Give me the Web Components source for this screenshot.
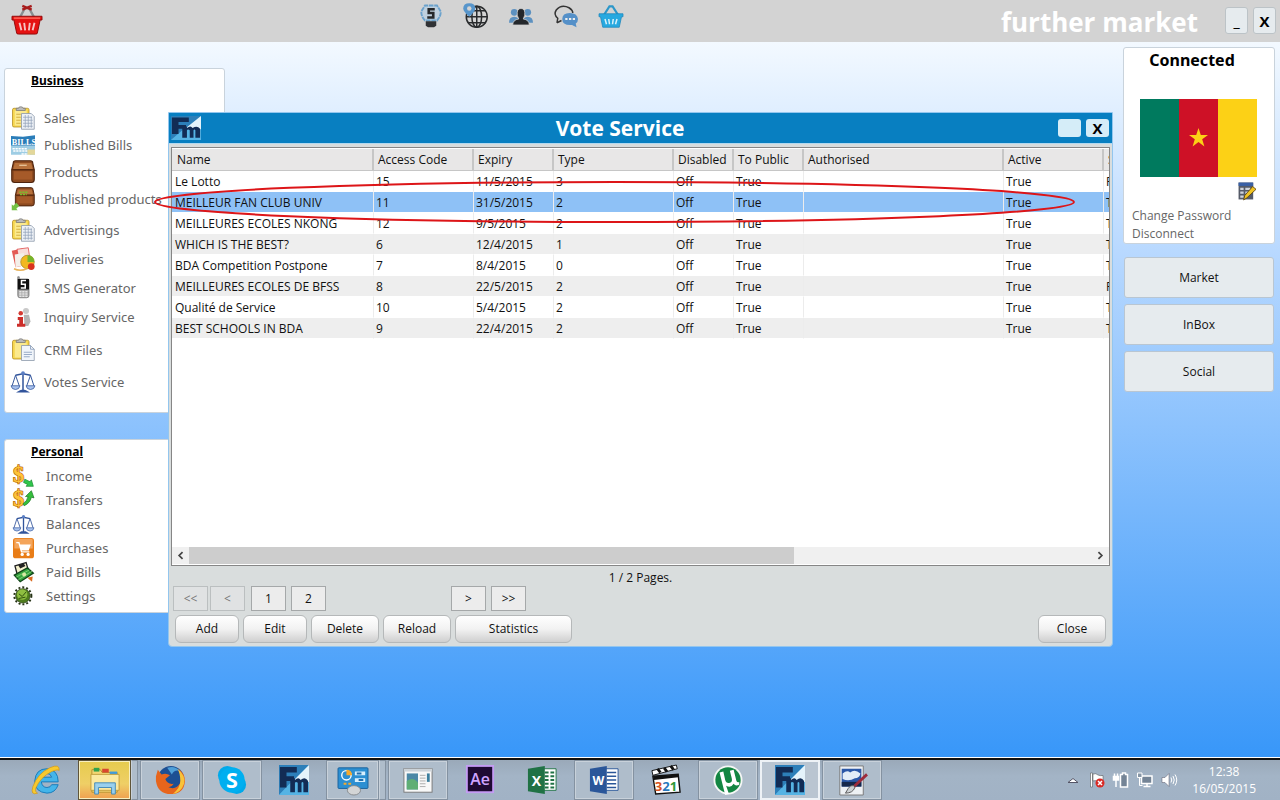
<!DOCTYPE html>
<html lang="en">
<head>
  <meta charset="utf-8">
  <title>further market</title>
  <style>
    html, body {
      margin: 0;
      min-height: 100%;
    }
    body {
      font: 12px/16px "Open Sans", "Noto Sans", sans-serif;
      color: #111;
    }
  </style>
</head>
<body>

<market-shell>
  <market-header slot="top"></market-header>

  <menu-panel slot="left" heading="Business">
    <menu-group style="--row: 27px">
      <menu-item icon="clipboard">Sales</menu-item>
      <menu-item icon="bills">Published Bills</menu-item>
      <menu-item icon="chest">Products</menu-item>
      <menu-item icon="chestOut">Published products</menu-item>
    </menu-group>
    <menu-group style="--row: 29px">
      <menu-item icon="clipboard">Advertisings</menu-item>
      <menu-item icon="delivery">Deliveries</menu-item>
      <menu-item icon="phone">SMS Generator</menu-item>
      <menu-item icon="inquiry">Inquiry Service</menu-item>
    </menu-group>
    <menu-group style="--row: 32px">
      <menu-item icon="crm">CRM Files</menu-item>
      <menu-item icon="scales">Votes Service</menu-item>
    </menu-group>
  </menu-panel>

  <menu-panel slot="left" heading="Personal" compact>
    <menu-group style="--row: 24px; --icon: 21px">
      <menu-item icon="income">Income</menu-item>
      <menu-item icon="transfer">Transfers</menu-item>
      <menu-item icon="scales">Balances</menu-item>
      <menu-item icon="cart">Purchases</menu-item>
      <menu-item icon="paid">Paid Bills</menu-item>
      <menu-item icon="gear">Settings</menu-item>
    </menu-group>
  </menu-panel>

  <account-card slot="right"></account-card>
  <side-button slot="right">Market</side-button>
  <side-button slot="right">InBox</side-button>
  <side-button slot="right">Social</side-button>

  <app-window slot="window" heading="Vote Service">
    <vote-table></vote-table>
    <vote-pager></vote-pager>
  </app-window>

  <task-bar slot="bottom">
    <task-button icon="ie" label="Internet Explorer"></task-button>
    <task-button icon="explorer" label="File Explorer" kind="hot stack"></task-button>
    <task-button icon="firefox" label="Firefox" kind="open"></task-button>
    <task-button icon="skype" label="Skype" kind="open"></task-button>
    <task-button icon="logo" label="Further Market"></task-button>
    <task-button icon="control" label="Control Panel" kind="open stack"></task-button>
    <task-button icon="viewer" label="Viewer" kind="open"></task-button>
    <task-button icon="ae" label="After Effects"></task-button>
    <task-button icon="excel" label="Excel"></task-button>
    <task-button icon="word" label="Word" kind="open"></task-button>
    <task-button icon="clapper" label="Media Player Classic"></task-button>
    <task-button icon="utorrent" label="uTorrent" kind="open"></task-button>
    <task-button icon="logo" label="Further Market" kind="active"></task-button>
    <task-button icon="paint" label="Paint" kind="open"></task-button>
  </task-bar>
</market-shell>

<script>
  /* Every icon is drawn on a 32 x 32 grid */
  const SCALES = `<g fill="none" stroke="#31549b" stroke-width="2">
      <path d="M16 3v24M6 7q5-1 10-2 5 1 10 2M10 29q6-4 12 0z"/>
      <path stroke-width="1.3" d="M6 7L1.500 21M6 7l5 14M26 7l-5 14M26 7l4.500 14"/></g>
      <path d="M0 21h12q-1 5-6 5t-6-5zM20 21h12q-1 5-6 5t-6-5z" fill="#a9c3ee" stroke="#31549b"/>
      <circle cx="16" cy="4" r="2.500" fill="#5b7fc4"/>`;
  const CLIP = `<rect x="2" y="3" width="22" height="25" rx="2" fill="#f6d64e" stroke="#b08a1e"/>
      <rect x="5" y="6" width="16" height="20" fill="#fbe98d"/>
      <path d="M7 6V3h3q0-2 3-2t3 2h3v3z" fill="#bbb" stroke="#777"/>`;
  const DOLLAR = `<text x="0" y="25" font-family="Liberation Serif, serif" font-weight="bold" font-size="34" fill="#ffc336" stroke="#b86a10" stroke-width="2" paint-order="stroke">$</text>`;
  const CHEST = `<path d="M3 4q0-3 3-3h20q3 0 3 3l2 9v13q0 4-4 4H5q-4 0-4-4V13z" fill="#8d4a20" stroke="#4d230d" stroke-width="1.500"/>
      <path d="M5 4h22l2 8H3z" fill="#b7713b"/><path d="M4 15h24v11H4z" fill="#a65a29"/>
      <path d="M1 13h30" stroke="#57290f" stroke-width="2"/>`;
  const ICONS = {
    basket: `<path d="M8 14L14 3M24 14L18 3" stroke="#888f91" stroke-width="2.500"/>
      <path d="M11 1l10 4M21 1L11 5" stroke="#a71c1c" stroke-width="2.500"/>
      <path d="M0 12h32v4H30L27 30q0 1-2 1H7q-2 0-2-1L2 16H0z" fill="#e51212" stroke="#8f0808"/>
      <path d="M8 19l2 8M13 19l1 8M19 19l-1 8M24 19l-2 8" stroke="#f6c5c5" stroke-width="2"/>
      <path d="M2 14h28" stroke="#ff6a5c" stroke-width="1.500"/>`,
    basketBlue: `<path d="M7 14L14 3h4l7 11" stroke="#2c97c9" stroke-width="3" fill="none"/>
      <path d="M0 13h32v4H30L27 31H5L2 17H0z" fill="#27a9e0" stroke="#1d86bb"/>
      <path d="M8 20l2 7M13 20l1 7M19 20l-1 7M24 20l-2 7" stroke="#d8f1fb" stroke-width="2"/>`,
    bulb: `<path d="M8 22Q3 17 3 10L8 2h16l5 8q0 7-5 12z" fill="#bfd0de" stroke="#6ba2cc" stroke-width="2.500" stroke-dasharray="6 1"/>
      <path d="M21 7h-8v5h6v6h-8" fill="none" stroke="#26282a" stroke-width="3.500"/>
      <path d="M9 23h14v6l-3 2h-8l-3-2z" fill="#303235"/>`,
    globe: `<g fill="none" stroke="#292b2d" stroke-width="2"><circle cx="17" cy="17" r="14"/>
      <ellipse cx="17" cy="17" rx="6.500" ry="14"/><path d="M17 3v28M3 17h28M6 9h23M6 25h23"/></g>
      <path d="M7 17Q-1 10-1 6q0-7 8-7t8 7q0 4-8 11z" fill="#5795cb"/><circle cx="7" cy="6" r="3" fill="#d3d3d3"/>`,
    people: `<g fill="#5d91c0"><circle cx="7" cy="11" r="4.500"/><circle cx="25" cy="11" r="4.500"/>
      <path d="M0 25q0-8 7-8t7 8zM18 25q0-8 7-8t7 8z"/></g>
      <path d="M5 28q0-7 8-8l-2-5q-1-9 5-9t5 9l-2 5q8 1 8 8z" fill="#24272b" stroke="#d3d3d3"/>`,
    chat: `<path d="M4 25l1-6Q-1 14 3 8q7-8 17-3 5 3 5 7" fill="none" stroke="#333" stroke-width="2"/>
      <path d="M4 25l6-3" stroke="#333" stroke-width="2"/>
      <path d="M11 20q0-8 10-8t11 8q0 4-3 6l1 5-6-3q-13 1-13-8z" fill="#5590c8"/>
      <path d="M15 20h3M20 20h3M25 20h3" stroke="#eee" stroke-width="2.500"/>`,
    clipboard: CLIP + `<path d="M14 10h13l4 4v17H14z" fill="#edf1f6" stroke="#8693a6"/>
      <path d="M16 15h12M16 19h13M16 23h13M16 27h13M19 12v17M23 12v17M27 14v15" stroke="#93a3b8"/>
      <path d="M7 11h6M7 15h6M7 19h6M7 23h6" stroke="#c79d28"/>`,
    crm: CLIP + `<path d="M14 10h12l5 5v15H14z" fill="#f1f5fa" stroke="#8693a6"/>
      <path d="M26 10v5h5M17 19h11M17 22h11M17 25h8" stroke="#7c93b5" fill="none"/>`,
    bills: `<path d="M0 4l16 1L32 3v14H0z" fill="#2b7db9"/><path d="M0 17h32v12H0z" fill="#9ecde4"/>
      <text x="1" y="16" font-family="Liberation Serif, serif" font-weight="bold" font-size="11" fill="#fff">BILLS</text>
      <path d="M2 21h20M3 24h22M14 28h12" stroke="#fff" stroke-width="2" stroke-dasharray="3 1"/>
      <path d="M22 22h10v7H22z" fill="#e3d79a"/>`,
    chest: CHEST + `<path d="M11 7h10" stroke="#efd3ab" stroke-width="1.500"/>`,
    chestOut: `<g transform="translate(5 0) scale(.84)">` + CHEST + `</g>
      <path d="M11 7h12M12 10h9" stroke="#79bd2e" stroke-width="2" stroke-dasharray="3 1"/>
      <path d="M1 31v-8l2 2 4-4 4 4-4 4 2 2z" fill="#74c244"/>`,
    delivery: `<path d="M1 5l14-3 5 22-14 3z" fill="#e35b54"/><path d="M8 3l15-2 3 20-14 4z" fill="#f8dedb" stroke="#d44"/>
      <path d="M5 10l12-2 2 16-13 3z" fill="#f4f0ea"/>
      <circle cx="22" cy="20" r="9" fill="#f2b81f" stroke="#ab8520"/><path d="M22 20V11q9 0 9 9z" fill="#75b52c"/>
      <circle cx="27" cy="26" r="4.500" fill="#d9331f"/><path d="M4 29q8 4 17 0" stroke="#e7b25a" stroke-width="2" fill="none"/>`,
    phone: `<path d="M9 1h2v3h11q2 0 2 2v20q0 3-3 3H12q-3 0-3-3z" fill="#a5a5a5" stroke="#777"/>
      <path d="M9 4h15v14H9z" fill="#111"/>
      <path d="M20 6h-6v5h5v5h-6" fill="none" stroke="#fff" stroke-width="2"/>
      <path d="M11 21h12M11 24h12M11 27h12" stroke="#e6e6e6" stroke-width="2" stroke-dasharray="3 1"/>`,
    inquiry: `<circle cx="20" cy="8" r="4" fill="#c9c9c9"/><path d="M17 13h7l2 9-3 6h-5z" fill="#b5b5b5"/>
      <circle cx="13" cy="11" r="3" fill="#d43a32"/><path d="M9 16h7v9h3v4H8v-4h3v-5H9z" fill="#cc2e2a"/>`,
    scales: SCALES,
    income: DOLLAR + `<path d="M18 20l8 4 2-3 3 10-11 0 2-3-6-3z" fill="#2fc64b" stroke="#16872b"/>`,
    transfer: DOLLAR + `<path d="M15 21q6-3 8-11l-4 0 9-9 4 11-4-1q-2 9-11 13z" fill="#35bf3c" stroke="#14731f"/>`,
    cart: `<rect x="0" y="0" width="32" height="31" rx="4" fill="#e97d17"/>
      <path d="M2 3q0-2 3-2h22q3 0 3 2v13H2z" fill="#f4a55b"/>
      <path d="M5 7h4l4 14h12" fill="none" stroke="#fff" stroke-width="2"/><path d="M10 10h17l-3 9H12z" fill="#fff"/>
      <circle cx="14" cy="25" r="2.500" fill="#fff"/><circle cx="23" cy="25" r="2.500" fill="#fff"/>`,
    paid: `<path d="M3 6l17-5 4 14-17 6z" fill="#f5f1cc" stroke="#222" stroke-width="2"/>
      <path d="M8 5l8-3 3 4-8 4z" fill="#222"/><path d="M2 20L22 9l9 8-20 13z" fill="#36a33e" stroke="#12461a" stroke-width="2"/>
      <path d="M5 23l20-11M8 27l21-13" stroke="#9ce08d"/><circle cx="17" cy="19" r="3" fill="#d8e9a4"/>
      <path d="M22 24l8-2-1 8z" fill="#d9691e"/>`,
    gear: `<circle cx="15" cy="15" r="13" fill="none" stroke="#263316" stroke-width="3" stroke-dasharray="3 3"/>
      <circle cx="15" cy="15" r="11" fill="#4f7d1d" stroke="#21350d"/><circle cx="14" cy="13" r="8" fill="#8fbe41"/>
      <path d="M9 12l5 4 6-7M9 19l10-2" stroke="#31510f" stroke-width="1.500" fill="none"/>`,
    edit: `<path d="M1 1h26v30H1z" fill="#555b68"/><path d="M1 1h26v6H1z" fill="#3960a6"/>
      <path d="M4 10h6v4H4zM4 17h6v4H4zM13 10h9v4h-9zM13 17h9v4h-9zM4 24h6v4H4z" fill="#cfd4dc"/>
      <path d="M10 32l2-8L26 8l6 5-16 15z" fill="#f0c323" stroke="#5b430c" stroke-width="1.500"/>`,
    logo: `<rect width="32" height="32" rx="1" fill="#4ba3d6"/><path d="M0 32L32 0H0z" fill="#2d7fb9"/>
      <path d="M14 18L32 0v18z" fill="#e4f3fb"/><path d="M0 32l13-14h19v14z" fill="#55b3e4"/>
      <path d="M1 2h18v6H8v4h8v5H8v7H1z" fill="#122c55"/>
      <path d="M12 29V14h5v2q4-4 6 0 5-4 8 1v12h-5v-10q-1-2-2 0v10h-4v-10q-2-2-3 0v10z" fill="#122c55"/>`,
    ie: `<path d="M29 18H11q1 6 6 6 4 0 5-3h7q-3 9-12 9Q4 29 4 17 5 4 17 4q12 1 12 14zM11 13h11q-1-4-5-4-5 0-6 4z" fill="#44b5ea" stroke="#1679b8"/>
      <path d="M7 30q-8 3-5-7Q7 9 20 3q11-5 10 3-1-2-8 1Q10 13 5 25q-1 4 2 5z" fill="#f8c92d" stroke="#cf9413" stroke-width=".7"/>`,
    explorer: `<path d="M2 5h9l2 3h16v21H2z" fill="#f4d774" stroke="#b58f2f"/><path d="M4 3h6v4H4z" fill="#31a24c"/>
      <path d="M13 4h7v4h-7z" fill="#d9472f"/><path d="M21 7h8v4h-8z" fill="#3f9bdc"/>
      <path d="M1 10h30v17H1z" fill="#fbe9a0" stroke="#c29e3d"/>
      <path d="M5 31V19h22v12h-4v-7H9v7z" fill="#99d0ee" stroke="#4389b5"/>`,
    firefox: `<circle cx="17" cy="15" r="14" fill="#1d4f93"/><path d="M13 3q8-3 13 3-6-1-8 4z" fill="#4f9fd8"/>
      <path d="M1 12l2-7 4 5q5-2 9 1l-5 4q2 6 9 5-3 5-7 3 9 5 14-4 3-8-2-15 7 5 7 13-1 14-15 14T1 17z" fill="#e7651c"/>
      <path d="M24 4q9 7 7 16-3 9-12 11 8-7 8-14 0-8-3-13z" fill="#f8c33a"/>`,
    skype: `<circle cx="11" cy="11" r="10" fill="#00a9ea"/><circle cx="21" cy="21" r="10" fill="#00a9ea"/>
      <circle cx="16" cy="16" r="13.500" fill="#00aff0"/>
      <text x="16" y="24" text-anchor="middle" font-family="Open Sans, sans-serif" font-weight="bold" font-size="23" fill="#fff">S</text>`,
    control: `<rect x="0" y="3" width="32" height="22" rx="1" fill="#2c8fd2" stroke="#1a619b"/>
      <circle cx="9" cy="11" r="5" fill="none" stroke="#fff" stroke-width="1.500"/><path d="M9 11V5q6 0 6 6z" fill="#f5a92d"/>
      <path d="M18 9h11M18 16h11" stroke="#d7effd" stroke-width="4"/><path d="M20 9h5M22 16h5" stroke="#216fae" stroke-width="2"/>
      <path d="M6 20h3M11 20h3" stroke="#f5a92d" stroke-width="2"/><ellipse cx="17" cy="27" rx="7" ry="5" fill="#d3d5d6" stroke="#85898c"/>`,
    viewer: `<rect x="1" y="4" width="30" height="25" fill="#f8f8f8" stroke="#777"/><path d="M1 4h30v3H1z" fill="#cdd3d8"/>
      <path d="M4 9h12v17H4z" fill="#4b88a6"/><path d="M4 26V17q7-5 12 2v7z" fill="#5fae74"/>
      <path d="M18 11h6M18 14h6M18 17h6M18 20h6M18 23h6" stroke="#aaa"/><path d="M27 9v9" stroke="#3c7f9e" stroke-width="3"/>`,
    ae: `<rect x="2" y="1" width="28" height="28" fill="#1f0a33" stroke="#c49cf4" stroke-width="2"/>
      <text x="16" y="21" text-anchor="middle" font-family="Open Sans, sans-serif" font-weight="600" font-size="17" fill="#cfa4ff">Ae</text>`,
    excel: `<path d="M16 4h15v23H16z" fill="#fff" stroke="#207245"/>
      <path d="M19 8h4M25 8h4M19 12h4M25 12h4M19 16h4M25 16h4M19 20h4M25 20h4M19 24h4M25 24h4" stroke="#207245" stroke-width="2"/>
      <path d="M1 4l18-3v30L1 28z" fill="#207245"/>
      <text x="10" y="22" text-anchor="middle" font-family="Open Sans, sans-serif" font-weight="bold" font-size="15" fill="#fff">X</text>`,
    word: `<path d="M16 4h15v23H16z" fill="#fff" stroke="#2a5699"/>
      <path d="M19 8h10M19 12h10M19 16h10M19 20h10M19 24h10" stroke="#2a5699" stroke-width="1.500"/>
      <path d="M1 4l18-3v30L1 28z" fill="#2a5699"/>
      <text x="10" y="21" text-anchor="middle" font-family="Open Sans, sans-serif" font-weight="bold" font-size="13" fill="#fff">W</text>`,
    clapper: `<path d="M1 6L27 0l1 4L2 11z" fill="#fff" stroke="#111"/><path d="M7 4l3 4M14 3l3 4M21 1l3 4" stroke="#111" stroke-width="3"/>
      <path d="M2 12l27-2 2 19-26 2z" fill="#fff" stroke="#111" stroke-width="1.500"/><path d="M2 12l27-2v3L3 16z" fill="#111"/>
      <g font-family="Open Sans, sans-serif" font-weight="bold" font-size="14"><text x="4" y="28" fill="#d95320">3</text>
      <text x="12" y="28" fill="#2878bd">2</text><text x="20" y="28" fill="#2f983a">1</text></g>`,
    utorrent: `<circle cx="16" cy="16" r="15.500" fill="#f5f7f5"/><circle cx="16" cy="16" r="13.500" fill="#138642"/>
      <path d="M7 8l4-1 2 9q1 4 5 3 3-1 2-5l-2-8 4-1 3 12q1 2 3 1v3q-4 2-6-1-3 5-8 2l3 9-4 1z" fill="#fff"/>`,
    paint: `<path d="M3 1h25v31H3z" fill="#eef1f4" stroke="#777"/><path d="M5 4h21v19H5z" fill="#2b57a6"/>
      <path d="M6 9q5-4 8-1 5-4 11 1-1 5-6 5-6 4-13 1z" fill="#e3edf7"/><path d="M5 18h21v5H5z" fill="#16284a"/>
      <path d="M32 10L17 24" stroke="#9c2b3b" stroke-width="3"/><path d="M18 22q-4-1-6 3l-3 5q8 0 10-6z" fill="#cdd1d4" stroke="#555"/>`,
    up: `<path d="M6 21l10-8 10 8z" fill="#fff" stroke="#556" stroke-width="2"/>`,
    flag: `<path d="M3 2h4v28H3z" fill="#fff" stroke="#444"/><path d="M8 4q6-2 10 2 4 2 10 1v13q-6 2-10-1-5-3-10-1z" fill="#fff" stroke="#444"/>
      <circle cx="22" cy="22" r="9" fill="#d82a25"/><path d="M18 18l8 8M26 18l-8 8" stroke="#fff" stroke-width="3"/>`,
    battery: `<path d="M15 5h4V2h6v3h4v25H15z" fill="#748496" stroke="#fff" stroke-width="3"/>
      <path d="M3 3v6M9 3v6M1 9h10v7H1zM6 16v14" stroke="#fff" stroke-width="3" fill="#fff"/>`,
    network: `<path d="M9 8h21v15H9z" fill="#748496" stroke="#fff" stroke-width="3"/><path d="M20 23v6M13 29h14" stroke="#fff" stroke-width="3"/>
      <path d="M1 2h9v9H1z" fill="#8796a6" stroke="#fff" stroke-width="2"/><path d="M5 11v16h6" stroke="#fff" stroke-width="2" fill="none"/>`,
    sound: `<path d="M2 11h6l8-8v26l-8-8H2z" fill="#fff" stroke="#556"/>
      <path d="M20 11q3 5 0 10M24 8q5 8 0 16M28 5q7 11 0 22" stroke="#fff" stroke-width="2" fill="none"/>`,
    left: `<path d="M22 6L12 16l10 10" fill="none" stroke="#444" stroke-width="5"/>`,
    right: `<path d="M10 6l10 10-10 10" fill="none" stroke="#444" stroke-width="5"/>`
  };

  /* Base class: clones the subclass markup in an open shadow root */
  class MarketElement extends HTMLElement {
    constructor() {
      super();
      this.attachShadow({ mode: "open" });
    }
    connectedCallback() {
      const template = document.createElement("template");
      template.innerHTML = this.render();
      this.shadowRoot.replaceChildren(template.content.cloneNode(true));
    }
  }

  class FmIcon extends MarketElement {
    render() {
      return `<style>
        :host { display: block; flex: none; width: var(--icon, 24px); height: var(--icon, 24px); }
        svg { display: block; width: 100%; height: 100%; overflow: visible; }
      </style>
      <svg viewBox="0 0 32 32" aria-hidden="true">${ICONS[this.getAttribute("name")]}</svg>`;
    }
  }

  class MarketShell extends MarketElement {
    render() {
      return `<style>
        :host { display: flex; flex-direction: column; min-height: 100vh; }
        #desktop {
          position: relative;
          flex: 1;
          display: flex;
          justify-content: space-between;
          align-items: flex-start;
          background: linear-gradient(#f3f9ff, #b7d8ff 30%, #3897f9);
          border-bottom: 1px solid #fff;
        }
        #left { display: flex; flex-direction: column; gap: 26px; width: 221px; padding: 26px 0 0 4px; }
        #right { display: flex; flex-direction: column; gap: 6px; width: 152px; padding: 5px 5px 0 0; }
        /* the floating window lies over the menus */
        #window { position: absolute; top: 70px; left: 168px; right: 167px; }
      </style>
      <slot name="top"></slot>
      <main id="desktop">
        <nav id="left"><slot name="left"></slot></nav>
        <aside id="right"><slot name="right"></slot></aside>
        <div id="window"><slot name="window"></slot></div>
      </main>
      <slot name="bottom"></slot>`;
    }
  }

  class MarketHeader extends MarketElement {
    render() {
      return `<style>
        :host {
          display: grid;
          grid-template-columns: 7fr auto 11fr;
          height: 42px;
          background: #d3d3d3;
        }
        #brand { --icon: 30px; padding: 5px 12px; }
        #tools { display: flex; gap: 21px; padding: 4px 0 0 1px; }
        #tools button { border: 0; padding: 0; height: 24px; background: none; }
        #end { display: flex; justify-content: flex-end; gap: 5px; padding: 7px 4px 0 0; }
        h1 { margin: 0 22px 0 0; font-size: 26px; line-height: 30px; color: #fff; white-space: nowrap; }
        #end button {
          width: 23px; height: 27px; padding: 0;
          border: 1px solid #bcc3c7; border-radius: 3px;
          background: #e6ebee;
          font: bold 15px/24px "Open Sans", sans-serif;
        }
      </style>
      <div id="brand"><fm-icon name="basket"></fm-icon></div>
      <div id="tools">
        ${["bulb", "globe", "people", "chat", "basketBlue"].map(n =>
          `<button aria-label="${n}"><fm-icon name="${n}"></fm-icon></button>`).join("")}
      </div>
      <div id="end"><h1>further market</h1><button>_</button><button>X</button></div>`;
    }
  }

  class MenuPanel extends MarketElement {
    render() {
      const compact = this.hasAttribute("compact");
      return `<style>
        :host {
          display: block;
          box-sizing: border-box;
          border: 1px solid #c9d3dc;
          border-radius: 3px;
          background: #fff;
          padding-bottom: ${compact ? 4 : 14}px;
          --label-gap: ${compact ? 11 : 9}px;
        }
        h2 {
          margin: 0 0 ${compact ? 0 : 11}px 26px;
          font: bold 12px/24px "Noto Sans", sans-serif;
          text-decoration: underline;
          color: #000;
        }
        #groups { display: flex; flex-direction: column; gap: 3px; }
      </style>
      <h2>${this.getAttribute("heading")}</h2>
      <div id="groups"><slot></slot></div>`;
    }
  }

  class MenuGroup extends MarketElement {
    render() {
      return `<style>
        :host { display: grid; grid-auto-rows: var(--row); }
      </style><slot></slot>`;
    }
  }

  class MenuItem extends MarketElement {
    render() {
      return `<style>
        :host { display: block; }
        a {
          display: flex;
          align-items: center;
          gap: var(--label-gap);
          height: 100%;
          padding-left: 6px;
          font: 13px/20px "Noto Sans", sans-serif;
          color: #666;
          text-decoration: none;
          white-space: nowrap;
        }
        span { display: grid; place-items: center; width: 24px; }
      </style>
      <a href="#"><span><fm-icon name="${this.getAttribute("icon")}"></fm-icon></span><slot></slot></a>`;
    }
  }

  class AccountCard extends MarketElement {
    render() {
      return `<style>
        :host {
          display: block;
          box-sizing: border-box;
          border: 1px solid #c9d3dc;
          border-radius: 3px;
          background: #fff;
          margin-bottom: 7px;
        }
        h2 { margin: 0; padding-right: 14px; font: bold 16px/24px "Noto Sans", sans-serif; text-align: center; color: #000; }
        #flag { display: block; width: 117px; height: 78px; margin: 27px 16px 5px; }
        #edit { --icon: 18px; display: flex; justify-content: flex-end; padding: 0 18px 7px 0; }
        a { display: block; padding-left: 8px; line-height: 18px; color: #666; text-decoration: none; }
      </style>
      <h2>Connected</h2>
      <svg id="flag" viewBox="0 0 117 78" role="img" aria-label="Cameroon">
        <path d="M0 0h39v78H0z" fill="#007a5e"/><path d="M39 0h39v78H39z" fill="#ce1126"/><path d="M78 0h39v78H78z" fill="#fcd116"/>
        <path d="M58.500 29l2.300 7h7.200l-5.800 4.300 2.200 7.100-5.900-4.300-5.900 4.300 2.200-7.100L49 36h7.200z" fill="#fcd116"/>
      </svg>
      <div id="edit"><fm-icon name="edit"></fm-icon></div>
      <a href="#">Change Password</a>
      <a href="#">Disconnect</a>`;
    }
  }

  class SideButton extends MarketElement {
    render() {
      return `<style>
        :host { display: block; padding: 0 1px; }
        button {
          width: 100%; height: 41px;
          border: 1px solid #b9c6d2; border-radius: 3px;
          background: #e6ebee;
          font: inherit; color: inherit;
        }
      </style><button><slot></slot></button>`;
    }
  }

  class AppWindow extends MarketElement {
    render() {
      return `<style>
        :host {
          display: block;
          border: 1px solid #93c6ee;
          border-radius: 0 0 4px 4px;
          background: #d9dddd;
        }
        header {
          display: grid;
          grid-template-columns: 1fr auto 1fr;
          align-items: center;
          height: 30px;
          padding: 0 3px 0 2px;
          background: #087fc1;
          border-bottom: 1px solid #b3d9ef;
        }
        #logo { width: 30px; height: 24px; display: block; }
        h2 { margin: 0 40px 0 0; font-size: 21px; line-height: 30px; color: #fff; }
        #buttons { display: flex; justify-content: flex-end; gap: 5px; }
        button {
          width: 23px; height: 18px; padding: 0;
          border: 0; border-radius: 3px;
          background: #d5edf8;
          font: bold 15px/18px "Open Sans", sans-serif;
        }
        #body { padding: 3px 2px 3px; }
      </style>
      <header>
        <svg id="logo" viewBox="0 0 32 32" preserveAspectRatio="none" aria-hidden="true">${ICONS.logo}</svg>
        <h2>${this.getAttribute("heading")}</h2>
        <div id="buttons"><button aria-label="Minimise"></button><button>X</button></div>
      </header>
      <div id="body"><slot></slot></div>`;
    }
  }

  const COLUMNS = [["Name", 200], ["Access Code", 100], ["Expiry", 80], ["Type", 120], ["Disabled", 60],
    ["To Public", 70], ["Authorised", 200], ["Active", 100], ["S", 60]];
  const VOTES = [
    ["Le Lotto", 15, "11/5/2015", 3, "F"],
    ["MEILLEUR FAN CLUB UNIV", 11, "31/5/2015", 2, "T"],
    ["MEILLEURES ECOLES NKONG", 12, "9/5/2015", 2, "T"],
    ["WHICH IS THE BEST?", 6, "12/4/2015", 1, "T"],
    ["BDA Competition Postpone", 7, "8/4/2015", 0, "T"],
    ["MEILLEURES ECOLES DE BFSS", 8, "22/5/2015", 2, "F"],
    ["Qualité de Service", 10, "5/4/2015", 2, "T"],
    ["BEST SCHOOLS IN BDA", 9, "22/4/2015", 2, "T"]
  ];

  class VoteTable extends MarketElement {
    render() {
      const rows = VOTES.map(([name, code, expiry, type, last], i) => {
        const cells = [name, code, expiry, type, "Off", "True", "", "True", last];
        return `<tr${i == 1 ? ' class="selected"' : ""}>${cells.map(c => `<td>${c}</td>`).join("")}</tr>`;
      }).join("");
      return `<style>
        :host { display: block; position: relative; }
        #frame {
          display: flex;
          flex-direction: column;
          min-height: 415px;
          border: 1px solid #868686;
          background: #fff;
          padding: 1px 0;
        }
        #view { flex: 1; overflow: hidden; }
        table { table-layout: fixed; border-collapse: separate; border-spacing: 0; width: 992px; }
        th, td { box-sizing: border-box; padding: 0; height: 21px; text-align: left; white-space: nowrap; overflow: hidden; }
        th {
          height: 22px;
          font-weight: normal;
          padding: 1px 0 0 4px;
          background: #e8e7e7;
          border-right: 2px solid #c6c6c6;
          border-bottom: 1px solid #c6c6c6;
        }
        th:first-child { padding-left: 5px; }
        td { padding: 1px 0 0 2px; border-right: 1px solid #ececec; border-bottom: 1px solid #fff; }
        td:first-child { padding-left: 3px; }
        tr:nth-child(even) td { background: #eee; }
        tr.selected td { background: #8ec1f6 !important; }
        #scroll { display: flex; height: 17px; background: #f0f0f0; --icon: 11px; }
        #scroll button { display: grid; place-items: center; width: 17px; border: 0; padding: 0; background: none; }
        #track { flex: 1; }
        #thumb { width: 67%; height: 100%; background: #cdcdcd; }
        /* hand-drawn mark round the selected row */
        #mark { position: absolute; top: 33px; left: -18px; right: 34px; height: 44px; pointer-events: none; }
        #mark svg { display: block; width: 100%; height: 100%; }
      </style>
      <div id="frame">
        <div id="view"><table>
          <colgroup>${COLUMNS.map(([, w], i) => `<col style="width: ${i ? w : w + 2}px">`).join("")}</colgroup>
          <thead><tr>${COLUMNS.map(([label]) => `<th>${label}</th>`).join("")}</tr></thead>
          <tbody>${rows}</tbody>
        </table></div>
        <div id="scroll">
          <button aria-label="Scroll left"><fm-icon name="left"></fm-icon></button>
          <div id="track"><div id="thumb"></div></div>
          <button aria-label="Scroll right"><fm-icon name="right"></fm-icon></button>
        </div>
      </div>
      <div id="mark"><svg viewBox="0 0 924 44" preserveAspectRatio="none" aria-hidden="true">
        <ellipse cx="462" cy="22" rx="460" ry="20" fill="none" stroke="#dd1518" stroke-width="2" vector-effect="non-scaling-stroke"/>
      </svg></div>`;
    }
  }

  class VotePager extends MarketElement {
    render() {
      return `<style>
        :host { display: block; }
        p { margin: 0; line-height: 20px; padding-top: 2px; text-align: center; }
        div { display: flex; }
        button { font: inherit; color: inherit; padding: 0; }
        #pages { gap: 5px; padding-left: 2px; margin: -2px 0 4px; }
        #pages button { width: 35px; height: 25px; border: 1px solid #a5a8a9; background: #ececec; }
        #pages button:disabled { color: #777; border-color: #bbbfc0; background: #e0e2e3; }
        #pages button:first-child { margin-right: -3px; }
        #pages .number { margin-left: 1px; }
        #pages .next { margin-left: 120px; }
        #actions { gap: 4px; padding: 0 4px; }
        #actions button {
          width: 64px; height: 28px;
          border: 1px solid #b5b8b9; border-radius: 6px;
          background: linear-gradient(#fff, #f2f2f2 50%, #cfcfcf);
        }
        #actions .mid { width: 68px; }
        #actions .wide { width: 117px; }
        #actions .last { margin-left: auto; }
      </style>
      <p>1 / 2 Pages.</p>
      <div id="pages">
        <button disabled>&lt;&lt;</button><button disabled>&lt;</button>
        <button class="number">1</button><button>2</button>
        <button class="next">&gt;</button><button>&gt;&gt;</button>
      </div>
      <div id="actions">
        <button>Add</button><button>Edit</button>
        <button class="mid">Delete</button><button class="mid">Reload</button>
        <button class="wide">Statistics</button>
        <button class="mid last">Close</button>
      </div>`;
    }
  }

  class TaskBar extends MarketElement {
    render() {
      return `<style>
        :host {
          display: flex;
          box-sizing: border-box;
          height: 42px;
          border-top: 2px solid #111;
          background: linear-gradient(#9aa9b9, #a3b4c6 40%, #a1b2c5);
        }
        #apps { display: flex; gap: 2px; padding-left: 16px; }
        #tray { --icon: 16px; display: flex; align-items: center; gap: 8px; margin-left: auto; padding-right: 24px; color: #fff; }
        #clock { margin-left: 7px; text-align: center; line-height: 17px; }
      </style>
      <div id="apps"><slot></slot></div>
      <div id="tray">
        ${["up", "flag", "battery", "network", "sound"].map(n => `<fm-icon name="${n}"></fm-icon>`).join("")}
        <div id="clock">12:38<br>16/05/2015</div>
      </div>`;
    }
  }

  class TaskButton extends MarketElement {
    render() {
      return `<style>
        :host { display: flex; width: 60px; }
        button {
          flex: 1;
          display: grid;
          place-items: center;
          box-sizing: border-box;
          padding: 0;
          border: 1px solid transparent;
          background: none;
          --icon: 30px;
        }
        .open { border-color: #8492a1; outline: 1px solid #c8d1da; outline-offset: -2px; background: #afbdcb; }
        .active { border: 2px solid #edf2f6; background: #b9c5d1; }
        .hot { border: 1px solid #5f553a; outline: 1px solid #f8efbf; outline-offset: -2px; background: linear-gradient(#e6cb4d, #efcf66 60%, #efa050); }
        i { display: none; }
        .stack + i { display: block; width: 5px; border: 1px solid #8492a1; border-left-color: #c8d1da; background: #afbdcb; }
      </style>
      <button class="${this.getAttribute("kind") || ""}" aria-label="${this.getAttribute("label")}">
        <fm-icon name="${this.getAttribute("icon")}"></fm-icon>
      </button><i></i>`;
    }
  }

  customElements.define("fm-icon", FmIcon);
  customElements.define("market-shell", MarketShell);
  customElements.define("market-header", MarketHeader);
  customElements.define("menu-panel", MenuPanel);
  customElements.define("menu-group", MenuGroup);
  customElements.define("menu-item", MenuItem);
  customElements.define("account-card", AccountCard);
  customElements.define("side-button", SideButton);
  customElements.define("app-window", AppWindow);
  customElements.define("vote-table", VoteTable);
  customElements.define("vote-pager", VotePager);
  customElements.define("task-bar", TaskBar);
  customElements.define("task-button", TaskButton);
</script>

</body>
</html>
